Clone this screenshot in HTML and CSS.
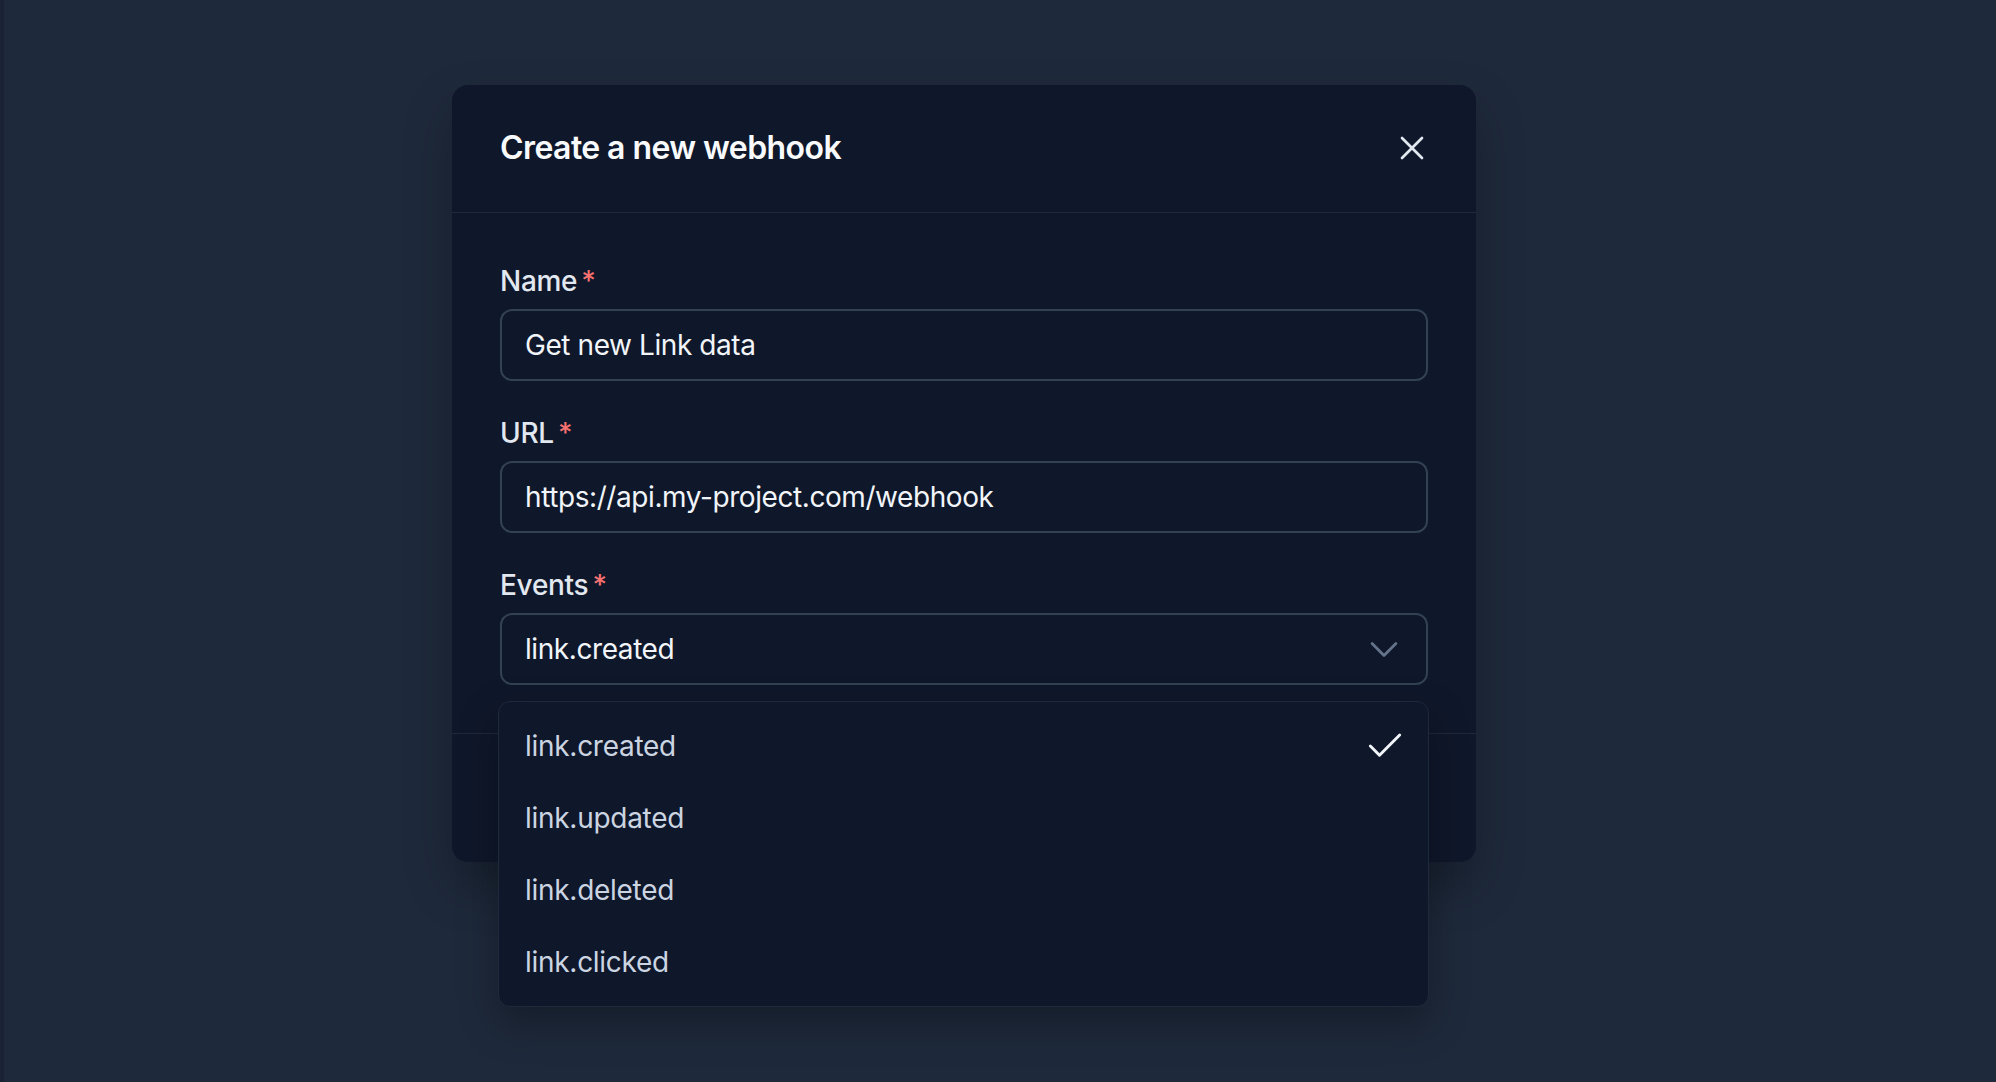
FILE: index.html
```html
<!DOCTYPE html>
<html>
<head>
    <meta charset="utf-8">
    <title>Create a new webhook</title>
    <link rel="stylesheet" href="styles.css">
</head>
<body>
    <div class="page">
        <div class="modal">
            <div class="modal-header">
                <h2 class="modal-title">Create a new webhook</h2>
                <button class="icon-btn" type="button">
                    <svg width="32" height="32" viewBox="0 0 24 24" fill="none" stroke="currentColor" stroke-width="2" stroke-linecap="round"><path d="M4.5 4.5l15 15M19.5 4.5l-15 15"/></svg>
                </button>
            </div>
            <div class="modal-body">
                <div class="field">
                    <label class="label">Name<span class="req">*</span></label>
                    <div class="input">Get new Link data</div>
                </div>
                <div class="field">
                    <label class="label">URL<span class="req">*</span></label>
                    <div class="input">https://api.my-project.com/webhook</div>
                </div>
                <div class="field select-field">
                    <label class="label">Events<span class="req">*</span></label>
                    <div class="input select">
                        <span>link.created</span>
                        <svg class="chevron" width="44" height="44" viewBox="0 0 24 24" fill="none" stroke="currentColor" stroke-width="1.5" stroke-linecap="round" stroke-linejoin="round"><path d="M5.5 9l6.5 6.5 6.5-6.5"/></svg>
                    </div>
                    <div class="menu">
                        <div class="menu-item">
                            <span>link.created</span>
                            <svg width="44" height="44" viewBox="0 0 24 24" fill="none" stroke="currentColor" stroke-width="1.6" stroke-linecap="round" stroke-linejoin="round"><path d="M20 6 9 17l-5-5"/></svg>
                        </div>
                        <div class="menu-item"><span>link.updated</span></div>
                        <div class="menu-item"><span>link.deleted</span></div>
                        <div class="menu-item"><span>link.clicked</span></div>
                    </div>
                </div>
            </div>
            <div class="modal-footer">
                <button class="btn" type="button">Cancel</button>
                <button class="btn btn-primary" type="button">Create webhook</button>
            </div>
        </div>
    </div>
</body>
</html>
```
FILE: styles.css
```css
* {
    box-sizing: border-box;
}
html, body {
    height: 100%;
}
body {
    margin: 0;
    background: #1e293b;
    border-left: 4px solid #1a2335;
    font-family: Inter, "Noto Sans", sans-serif;
    color: #e2e8f0;
}
.page {
    padding: 85px 0 0 448px;
}
.modal {
    width: 1024px;
    background: #0f172a;
    border-radius: 16px;
    box-shadow: 0 24px 48px rgba(0, 0, 0, 0.25);
}
.modal-header {
    display: flex;
    align-items: center;
    justify-content: space-between;
    padding: 39px 48px 40px;
    border-bottom: 1px solid #1e293b;
}
.modal-title {
    margin: 0;
    font-size: 32px;
    line-height: 48px;
    font-weight: 600;
    letter-spacing: -0.018em;
    color: #f8fafc;
}
.icon-btn {
    display: flex;
    padding: 0;
    border: none;
    background: none;
    color: #e2e8f0;
}
.modal-body {
    padding: 48px;
    display: flex;
    flex-direction: column;
    gap: 32px;
}
.field {
    display: flex;
    flex-direction: column;
    gap: 8px;
}
.select-field {
    position: relative;
}
.label {
    font-size: 28px;
    line-height: 40px;
    font-weight: 500;
    letter-spacing: -0.01em;
    color: #e2e8f0;
}
.req {
    color: #f87171;
    margin-left: 4px;
}
.input {
    height: 72px;
    display: flex;
    align-items: center;
    padding: 0 20px 0 23px;
    border: 2px solid #334155;
    border-radius: 12px;
    font-size: 28px;
    letter-spacing: -0.015em;
    color: #f1f5f9;
}
.select {
    justify-content: space-between;
}
.chevron {
    color: #64748b;
}
.menu {
    position: absolute;
    top: 136px;
    left: -2px;
    width: 931px;
    padding: 8px 0;
    background: #0f172a;
    border: 1px solid #1e293b;
    border-radius: 12px;
    box-shadow: 0 16px 40px rgba(0, 0, 0, 0.3);
    z-index: 2;
}
.menu-item {
    height: 72px;
    display: flex;
    align-items: center;
    justify-content: space-between;
    padding: 0 21px 0 26px;
    font-size: 28px;
    letter-spacing: -0.01em;
    color: #cbd5e1;
}
.menu-item svg {
    color: #f1f5f9;
}
.modal-footer {
    display: flex;
    justify-content: flex-end;
    gap: 16px;
    padding: 40px 48px;
    border-top: 1px solid #1e293b;
}
.btn {
    height: 48px;
    padding: 0 24px;
    border: 1px solid #334155;
    border-radius: 10px;
    background: none;
    font: inherit;
    font-size: 24px;
    color: #e2e8f0;
}
.btn-primary {
    background: #f1f5f9;
    color: #0f172a;
}
```
